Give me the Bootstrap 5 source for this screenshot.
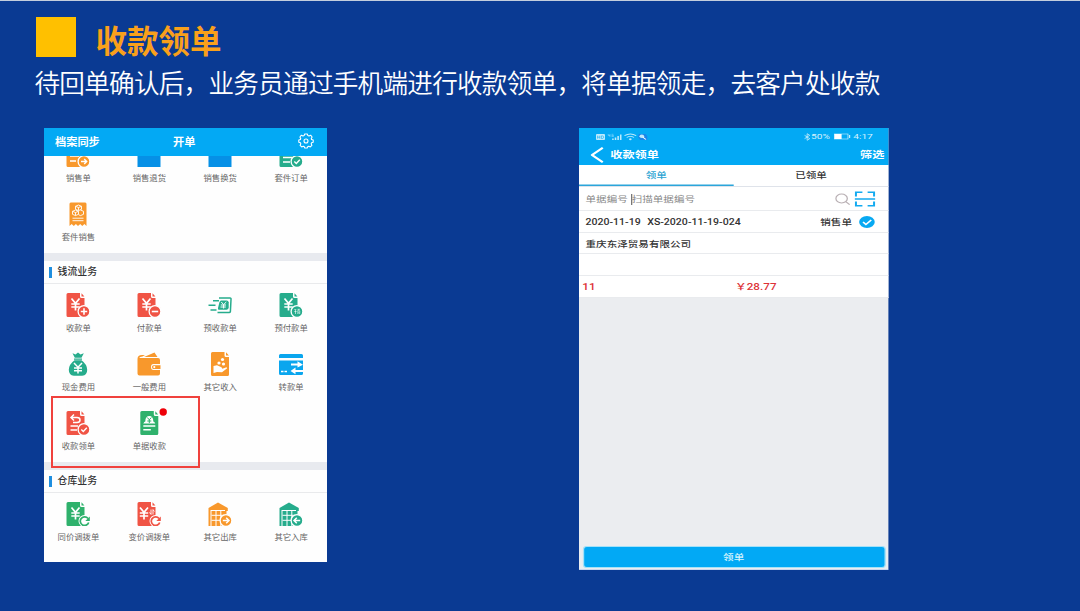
<!DOCTYPE html>
<html lang="zh-CN">
<head>
<meta charset="utf-8">
<meta name="viewport" content="width=device-width, initial-scale=1">
<title>收款领单</title>
<link href="https://cdn.jsdelivr.net/npm/bootstrap@5.3.0/dist/css/bootstrap.min.css" rel="stylesheet">
<style>
  body { background:#0a3a93; font-family:"Liberation Sans","Noto Sans CJK SC",sans-serif; height:611px; overflow:hidden; border-top:1px solid #c3cddd; }
  .slide-head { padding:16px 0 0 36px; height:127px; }
  .marker { width:40px; height:40px; background:#ffc000; }
  .slide-title { font-size:31.5px; line-height:40px; font-weight:700; color:#f9a01b; margin:5px 0 0 19.5px; }
  .slide-text { font-size:25.6px; letter-spacing:-.74px; line-height:36px; color:#fff; font-weight:350; margin:4px 0 0 -1.5px; white-space:nowrap; }
  .phones { padding-left:43.5px; gap:252px; }
  .phone-a { width:283.5px; height:434px; background:#fefefe; overflow:hidden; }
  .bar-a { height:28px; background:#03a9f4; color:#fff; font-size:11.2px; font-weight:700; z-index:2; display:grid; grid-template-columns:1fr auto 1fr; padding:0 13.5px 0 11.5px; }
  .tiles { display:grid; grid-template-columns:repeat(4,1fr); margin-left:-.5px; margin-right:.5px; }
  .tiles.cut { margin-top:-22px; }
  .tile { height:59.3px; padding-top:9px; text-align:center; font-size:8.35px; line-height:12px; color:#666; }
  .tile svg { display:block; width:24px; height:24px; margin:0 auto 4.9px; overflow:visible; }
  .gap-band { height:8.4px; background:#e8eaef; }
  .sec { height:22.8px; border-bottom:1px solid #e9eaec; padding:1.5px 0 0 5px; font-size:9.9px; font-weight:500; color:#333; }
  .sec::before { content:""; width:3px; height:11px; background:#1f8fe0; margin-right:6px; }
  .hot { left:7.5px; top:268px; width:149px; height:72px; border:2px solid #f0413d; }
  .red{color:#f05445}.green{color:#2fb16c}.teal{color:#26ac8c}.orange{color:#f8982c}.sky{color:#0aa6ee}.blue{color:#0690e6}

  .phone-b { width:309.4px; height:442px; }
  /* the phone view is a narrow layout stretched sideways */
  .stretch { width:238px; height:442px; transform:scaleX(1.3); transform-origin:0 0; background:#ebedf0; font-family:Roboto,"Noto Sans CJK SC",sans-serif; font-size:8.15px; color:#333; line-height:12px; box-shadow:inset 0 -1px #c9d6ee; }
  .bar-b { background:#03a9f4; height:37px; color:#fff; }
  .status { height:16px; padding:1px 12px 0 13px; font-size:7.8px; color:#d5f1fd; }
  .bar-title { height:21px; font-size:9.4px; font-weight:700; padding:0 4px 0 9px; }
  .tabs-b { height:22px; background:#fff; border-bottom:1px solid #dfe3ea; }
  .tabs-b > div { flex:1; text-align:center; line-height:21px; font-weight:500; height:21px; }
  .tabs-b .on { color:#2ba3d2; box-shadow:inset 0 -1.5px #2ba5da; }
  .line-b { background:#fff; border-bottom:1px solid #e9ebee; padding:1px 10px 0 5px; font-weight:500; }
  .caret { width:1px; height:11px; background:#777; margin:0 0 0 2px; }
  .btn-b { margin:auto 2.5px 2px; height:22px; border-radius:3px; background:#02a9f5; border:.6px solid #a4e1f8; color:#d6f4fd; font-weight:500; }
</style>
</head>
<body>
<header class="slide-head">
  <div class="d-flex align-items-start" style="height:40px"><div class="marker"></div><h1 class="slide-title">收款领单</h1></div>
  <p class="slide-text" style="margin-top:9px">待回单确认后，业务员通过手机端进行收款领单，将单据领走，去客户处收款</p>
</header>

<svg width="0" height="0" class="position-absolute">
  <defs>
    <symbol id="doc" viewBox="0 0 24 24"><path fill="currentColor" d="M2 0H14V3.500Q14 5 15.500 5H18.500V22.500Q18.500 24 17 24H2Q.5 24 .5 22.500V1.500Q.5 0 2 0ZM15.500 .2L18.400 3.500H15.500Z"/></symbol>
    <symbol id="yen" viewBox="0 0 24 24"><path fill="none" stroke="#fff" stroke-width="1.700" d="M5.500 5.500L9.500 10.300L13.500 5.500M9.500 10V17.500M5.300 11H13.700M5.300 14H13.700"/></symbol>
    <symbol id="disc" viewBox="0 0 24 24"><circle cx="18" cy="18.500" r="5.900" fill="currentColor" stroke="#fff" stroke-width="1.300"/></symbol>
    <symbol id="redo" viewBox="0 0 24 24"><circle cx="18.500" cy="19" r="6" fill="#fff"/><path d="M22 16.500A4.300 4.300 0 1 0 22.700 20.500" fill="none" stroke="currentColor" stroke-width="1.700"/><path d="M23.800 14.500V19H19.300Z" fill="currentColor"/></symbol>
    <symbol id="house" viewBox="0 0 24 24"><path fill="currentColor" d="M.5 6L10 .5L19.800 6V9H18.500V24H.5Z"/><path d="M3 8.500H17M3.500 13.300H17M3.500 18.300H17M3 8V24M8 9V24M12.800 9V24" stroke="#fff" stroke-width="1" fill="none"/></symbol>
  </defs>
</svg>

<main class="phones d-flex align-items-start">
  <section class="phone-a position-relative">
    <div class="bar-a position-relative align-items-center">
      <span>档案同步</span><span>开单</span>
      <svg class="ms-auto" style="margin-top:-3px" width="16" height="16" viewBox="0 0 16 16" fill="none" stroke="#fff" stroke-width="1.100" stroke-linejoin="round"><path d="M6.700 1H9.300L9.900 2.600L11 3L12.600 2.200L14.100 4L13.300 5.500L13.600 6.500L15.200 7.100V9.200L13.600 9.800L13.200 10.800L13.900 12.400L12.300 13.900L10.800 13.200L9.900 13.600L9.200 15H6.800L6.100 13.600L5.200 13.200L3.700 13.900L2.100 12.400L2.800 10.800L2.400 9.800L.8 9.200V7.100L2.400 6.500L2.700 5.500L1.900 4L3.400 2.200L5 3L6.100 2.600Z"/><circle cx="8" cy="8" r="2"/></svg>
    </div>
    <div class="tiles cut">
      <div class="tile"><svg class="orange"><use href="#doc"/><path d="M4 13h9M4 18h6" stroke="#fff" stroke-width="1.500"/><use href="#disc"/><path d="M15 18.500h5M18.200 16l2.500 2.500l-2.500 2.500" fill="none" stroke="#fff" stroke-width="1.400"/></svg>销售单</div>
      <div class="tile"><svg class="blue"><rect x=".5" width="23" height="24" fill="currentColor"/></svg>销售退货</div>
      <div class="tile"><svg class="blue"><rect x=".5" width="23" height="24" fill="currentColor"/></svg>销售换货</div>
      <div class="tile"><svg class="teal"><use href="#doc"/><path d="M4 10h9M4 14.500h9M4 19h7" stroke="#fff" stroke-width="1.500"/><use href="#disc"/><path d="M15.300 18.500l2 2l3.500-3.700" fill="none" stroke="#fff" stroke-width="1.400"/></svg>套件订单</div>
      <div class="tile"><svg class="orange"><path fill="currentColor" d="M4.800 .5H19.200Q20.500 .5 20.500 2V24L18.400 22L16.300 24L14.200 22L12 24L9.900 22L7.800 24L5.700 22L3.500 24V2Q3.500 .5 4.800 .5Z"/><path d="M12.500 3l3 1.300v3l-3 1.300l-3-1.300v-3zM9.500 4.300l3 1.200l3-1.200M12.500 5.500v3M9.500 8l3 1.300v3l-3 1.300l-3-1.300v-3zM6.500 9.300l3 1.200l3-1.200M9.500 10.500v3M14.500 8l3 1.300v3l-3 1.300l-2-1M6.500 16.200h11M6.500 18.700h11" fill="none" stroke="#fff" stroke-width=".9"/></svg>套件销售</div>
    </div>
    <div class="gap-band"></div>
    <div class="sec d-flex align-items-center">钱流业务</div>
    <div class="tiles">
      <div class="tile"><svg class="red"><use href="#doc"/><use href="#yen"/><use href="#disc"/><path d="M14.800 18.500h6.400M18 15.300v6.400" stroke="#fff" stroke-width="1.600"/></svg>收款单</div>
      <div class="tile"><svg class="red"><use href="#doc"/><use href="#yen"/><use href="#disc"/><path d="M14.800 18.500h6.400" stroke="#fff" stroke-width="1.600"/></svg>付款单</div>
      <div class="tile"><svg class="teal" fill="none" stroke="currentColor"><path stroke-width="1.500" d="M5 7.800h6M.5 12.300h7M2.500 17h6M11 5H22q1.300 0 1 1.500l-.6 12q-.2 1-1.300 1H9.500"/><path fill="currentColor" stroke="none" d="M12.800 7.500h6q1.500 0 1.900 1.800v5q0 2-2 2.500h-8q-1-.3-.7-1.800l1.500-6z"/><path stroke="#fff" d="M13.300 9l2.300 2.600L18.300 9M15.600 11.500v4M12.800 12h5.200M12.500 14h5.300"/></svg>预收款单</div>
      <div class="tile"><svg class="teal"><use href="#doc"/><use href="#yen"/><use href="#disc"/><path d="M15.300 16.500h2M15.300 18.500h2.300M16.500 17v4M18.500 16.300h2.500M19.700 16.300l-.8 1.200M18.800 17.800h2v2h-2zM18.500 21l.7-1M21 21l-.7-1" fill="none" stroke="#fff" stroke-width=".6"/></svg>预付款单</div>
      <div class="tile"><svg class="teal"><path fill="currentColor" d="M6.500 1.200l3 1.300L12 .5l2.500 2l3.300-1.300l-2.300 4.500H8.800zM8 6.500h8v1.200H8zM8.500 8.300h7q5.500 4 5.700 9.500q0 5.500-5 5.900H7.800q-5-.4-5-5.900Q3 12.300 8.500 8.300z"/><path d="M8 11l4 4.200l4-4.200M12 15v6.500M8 16h8M8 18.700h8" fill="none" stroke="#fff" stroke-width="1.500"/></svg>现金费用</div>
      <div class="tile"><svg class="orange"><path fill="currentColor" d="M7 5L17.500 .5L20.500 5ZM.5 7Q.5 3 5 3H8L5.500 4.500Q2.500 4.500 2.500 6H21Q23 6 23 8V12H16.500Q14 12 14 15Q14 18 16.500 18H23V21.500Q23 23.500 21 23.500H2.500Q.5 23.500 .5 21.500ZM16.500 13.200H23.500V17H16.500Q15 17 15 15.100Q15 13.200 16.500 13.200Z"/><circle cx="17.300" cy="15.100" r="1.100" fill="#fff"/></svg>一般费用</div>
      <div class="tile"><svg class="orange" viewBox="-2.500 0 24 24"><use href="#doc" width="24" height="24"/><path fill="#fff" d="M3 14l3.500-.7l4.500 2l.8 1.500l4.200-1.500l.7 1l-5.200 4l-5-.3l-3.500 1z"/><g fill="#fff"><circle cx="12" cy="7.500" r="1.600"/><circle cx="8.500" cy="11" r="1.600"/><circle cx="13" cy="12" r="1.600"/></g></svg>其它收入</div>
      <div class="tile"><svg class="sky"><path fill="currentColor" d="M1.500 2H22.500Q24 2 24 3.500V6H0V3.500Q0 2 1.500 2ZM0 8.500H24V21.500Q24 23 22.500 23H1.500Q0 23 0 21.500Z"/><path d="M2 19.500h2.500M5.500 19.500h2.500" stroke="#fff" stroke-width="1.700"/><path d="M12 12.500h8M14 19h10" stroke="#fff" stroke-width="1.800"/><path d="M18.500 9.300L24 12.800L18.500 15.500ZM16.500 15.500L11.500 19L16.500 22.300Z" fill="#fff"/></svg>转款单</div>
      <div class="tile"><svg class="red"><use href="#doc"/><path d="M8 3.500L5 6.500L8 9.500M5.500 6.500H11Q14 6.500 14 9T11 11.500H7M4.500 15H12M4.500 19H11" fill="none" stroke="#fff" stroke-width="1.500"/><use href="#disc"/><path d="M15.300 18.500l2 2l3.500-3.700" fill="none" stroke="#fff" stroke-width="1.400"/></svg>收款领单</div>
      <div class="tile"><svg class="green" viewBox="-2.800 0 24 24"><use href="#doc" width="24" height="24"/><path d="M3.500 12.500H15.500Q14.500 10.500 13.500 10.500Q13.500 5 9.500 5T5.500 10.500Q4.500 10.500 3.500 12.500Z" fill="#fff"/><path d="M7.500 6.500l2 2.300l2-2.300M9.500 8.500v3.500M7.500 10h4" fill="none" stroke="currentColor"/><path d="M3.500 15H15.500M3.500 18.800H11" stroke="#fff" stroke-width="1.500"/><circle cx="23.400" cy="1" r="3.700" fill="#ee0008"/></svg>单据收款</div>
    </div>
    <div class="gap-band"></div>
    <div class="sec d-flex align-items-center">仓库业务</div>
    <div class="tiles">
      <div class="tile"><svg class="green"><use href="#doc"/><use href="#yen"/><use href="#redo"/></svg>同价调拨单</div>
      <div class="tile"><svg class="red"><use href="#doc"/><use href="#yen" x="-2.500"/><path d="M14 7.500v5M14.300 12.300l-2-1.700M16 12.500v-5M15.800 7.700L17.500 9.300" stroke="#fff" stroke-width=".9" fill="none"/><use href="#redo"/></svg>变价调拨单</div>
      <div class="tile"><svg class="orange"><use href="#house"/><use href="#disc"/><path d="M14.800 18.500h5M18.200 15.700l2.800 2.800l-2.800 2.800" fill="none" stroke="#fff" stroke-width="1.500"/></svg>其它出库</div>
      <div class="tile"><svg class="teal"><use href="#house"/><use href="#disc"/><path d="M16 18.500h5.200M17.800 15.700l-2.800 2.800l2.800 2.800" fill="none" stroke="#fff" stroke-width="1.500"/></svg>其它入库</div>
    </div>
    <div class="hot position-absolute"></div>
  </section>

  <section class="phone-b">
    <div class="stretch d-flex flex-column">
      <div class="bar-b">
        <div class="status d-flex align-items-center">
          <svg width="40" height="8" viewBox="0 0 40 8" fill="#bdeafc"><rect y="1" width="7" height="6" rx=".8"/><path d="M1.300 2.700v3M3 2.700v3M1.300 4.200H3M4.200 2.900h.8q1 .2 1 1.300t-1 1.300h-.8z" stroke="#03a9f4" stroke-width=".5" fill="none"/><path d="M9.500 1v1.500h1.500M10.800 1v3M12 1.300h1.500M12 2.500h1.500v1h-1.500" stroke="#bdeafc" stroke-width=".4" fill="none"/><path d="M12.500 7V5.500h1.200V7zM14.500 7V4.500h1.200V7zM16.500 7V3h1.200V7zM18.500 7V1.500h1.200V7z"/><g fill="none" stroke="#bdeafc" stroke-width=".9"><path d="M22 2.700q4.500-3.500 9 0M23.700 4.500q2.800-2.200 5.600 0"/></g><circle cx="26.500" cy="6.300" r="1"/><path fill="#1884e9" d="M33 1h5l1.500 2v4H34l-1.500-3z"/><circle cx="35.300" cy="3.300" r="1.800"/><path d="M36 4l2.500 2.500" stroke="#fff"/></svg>
          <svg class="ms-auto" width="5" height="8" viewBox="0 0 5 8"><path d="M.5 2.300l4 3.400L2.500 7.300V.7l2 1.600l-4 3.400" fill="none" stroke="#c8eefc" stroke-width=".7"/></svg><span>50%</span>
          <svg style="margin:0 2px 0 3px" width="13" height="7" viewBox="0 0 13 7"><rect x=".4" y="1" width="10.500" height="5" fill="none" stroke="#c8eefc" stroke-width=".6"/><rect x=".5" y="1" width="5.500" height="5" fill="#fff"/><path d="M12.200 2v3" stroke="#c8eefc"/></svg><span>4:17</span>
        </div>
        <div class="bar-title d-flex align-items-center"><svg width="10" height="16" viewBox="0 0 10 16"><path d="M9.300 .8L1 8L9.300 15.200" fill="none" stroke="#fff" stroke-width="1.900"/></svg><span style="margin-left:5px">收款领单</span><span class="ms-auto" style="margin-right:-1px">筛选</span></div>
      </div>
      <div class="tabs-b d-flex"><div class="on">领单</div><div>已领单</div></div>
      <div class="line-b d-flex align-items-center" style="height:24px;color:#888;font-weight:400"><span>单据编号</span><i class="caret"></i><span>扫描单据编号</span>
        <svg class="ms-auto" width="12" height="13" viewBox="0 0 12 13"><g fill="none" stroke="#b9b0b4"><circle cx="5" cy="5.500" r="4.400"/><path d="M8.200 8.700l3 3"/></g></svg>
        <svg style="margin-left:3px" width="16" height="16" viewBox="0 0 16 16"><path fill="none" stroke="#13aaf0" stroke-width="1.600" d="M1 5.500V1.300H6M10 1.300H15V5.500M1 10.500V14.700H6M10 14.700H15V10.500M0 8H16"/></svg>
      </div>
      <div class="line-b d-flex align-items-center" style="height:22px"><span>2020-11-19</span><span style="margin-left:5px">XS-2020-11-19-024</span><span class="ms-auto">销售单</span>
        <svg style="margin-left:5px" width="13" height="13" viewBox="0 0 13 13"><circle cx="6.500" cy="6" r="6" fill="#08a9f2"/><path d="M3.500 6L5.700 8.500L9.800 4" fill="none" stroke="#fff" stroke-width="1.300"/></svg>
      </div>
      <div class="line-b d-flex align-items-center" style="height:21px">重庆东泽贸易有限公司</div>
      <div class="line-b" style="height:22px"></div>
      <div class="line-b d-flex align-items-center" style="height:21.500px;color:#dd3338;font-size:9px;padding-left:2.500px"><span style="width:117.500px">11</span><span>￥28.77</span></div>
      <div class="btn-b d-flex align-items-center justify-content-center">领单</div>
    </div>
  </section>
</main>
<script src="https://cdn.jsdelivr.net/npm/bootstrap@5.3.0/dist/js/bootstrap.bundle.min.js"></script>
</body>
</html>
